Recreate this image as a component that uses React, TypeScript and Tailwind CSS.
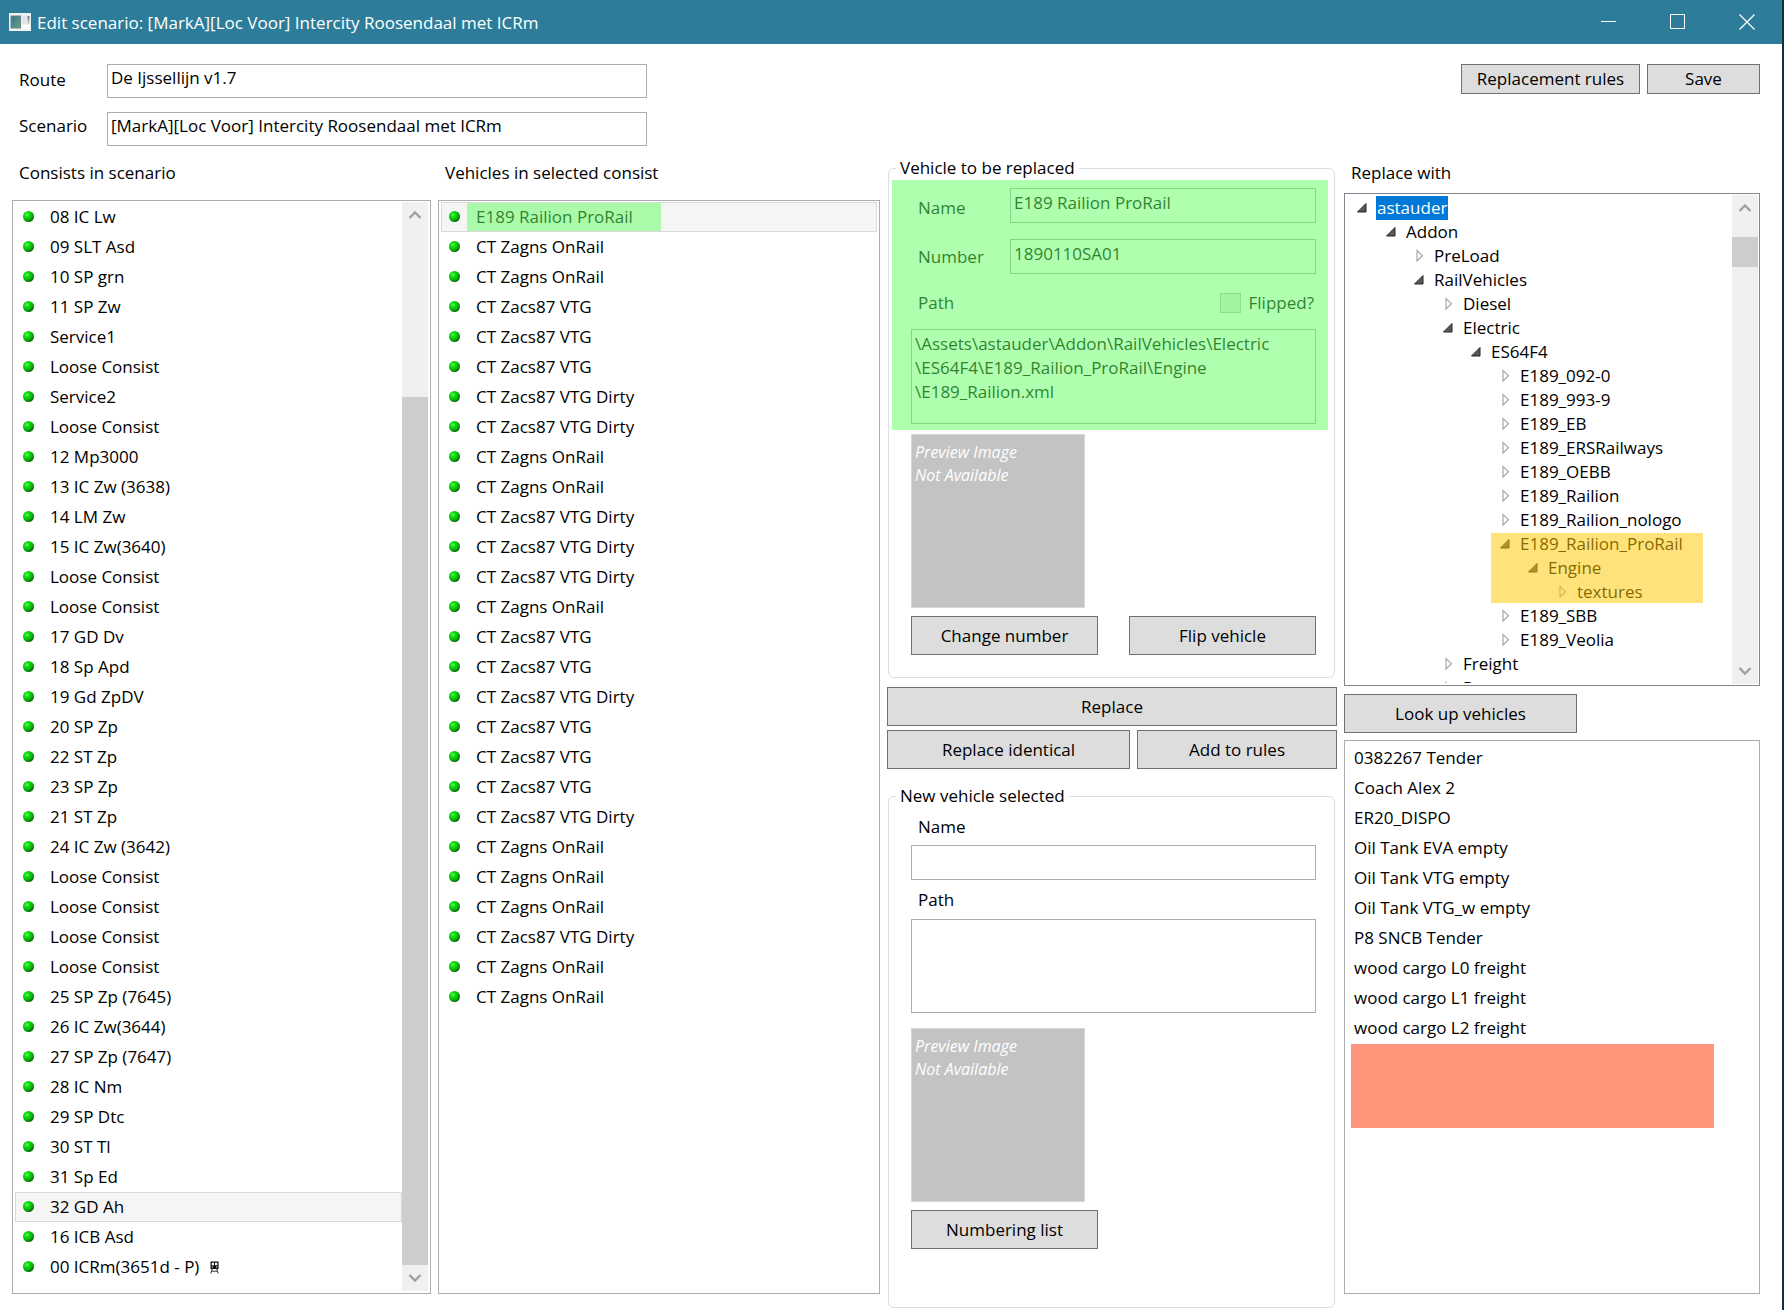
import React from "react";

type Option = { label: string; train?: boolean };

const consists: Option[] = [
  "08 IC Lw", "09 SLT Asd", "10 SP grn", "11 SP Zw", "Service1", "Loose Consist", "Service2", "Loose Consist",
  "12 Mp3000", "13 IC Zw (3638)", "14 LM Zw", "15 IC Zw(3640)", "Loose Consist", "Loose Consist", "17 GD Dv",
  "18 Sp Apd", "19 Gd ZpDV", "20 SP Zp", "22 ST Zp", "23 SP Zp", "21 ST Zp", "24 IC Zw (3642)", "Loose Consist",
  "Loose Consist", "Loose Consist", "Loose Consist", "25 SP Zp (7645)", "26 IC Zw(3644)", "27 SP Zp (7647)",
  "28 IC Nm", "29 SP Dtc", "30 ST Tl", "31 Sp Ed", "32 GD Ah", "16 ICB Asd",
].map((label) => ({ label }) as Option).concat([{ label: "00 ICRm(3651d - P)", train: true }]);

const Z = "CT Zagns OnRail";
const V = "CT Zacs87 VTG";
const D = "CT Zacs87 VTG Dirty";
const vehicles = ["E189 Railion ProRail", Z, Z, V, V, V, D, D, Z, Z, D, D, D, Z, V, V, D, V, V, V, D, Z, Z, Z, D, Z, Z];

const stock = [
  "0382267 Tender", "Coach Alex 2", "ER20_DISPO", "Oil Tank EVA empty", "Oil Tank VTG empty", "Oil Tank VTG_w empty",
  "P8 SNCB Tender", "wood cargo L0 freight", "wood cargo L1 freight", "wood cargo L2 freight",
];

type Node = { label: string; level: number; open?: boolean };
const treeTop: Node[] = [
  { label: "astauder", level: 0, open: true },
  { label: "Addon", level: 1, open: true },
  { label: "PreLoad", level: 2 },
  { label: "RailVehicles", level: 2, open: true },
  { label: "Diesel", level: 3 },
  { label: "Electric", level: 3, open: true },
  { label: "ES64F4", level: 4, open: true },
  { label: "E189_092-0", level: 5 },
  { label: "E189_993-9", level: 5 },
  { label: "E189_EB", level: 5 },
  { label: "E189_ERSRailways", level: 5 },
  { label: "E189_OEBB", level: 5 },
  { label: "E189_Railion", level: 5 },
  { label: "E189_Railion_nologo", level: 5 },
];
const treeMarked: Node[] = [
  { label: "E189_Railion_ProRail", level: 5, open: true },
  { label: "Engine", level: 6, open: true },
  { label: "textures", level: 7 },
];
const treeBottom: Node[] = [
  { label: "E189_SBB", level: 5 },
  { label: "E189_Veolia", level: 5 },
  { label: "Freight", level: 3 },
  { label: "Passenger", level: 3 },
];

const indent = ["pl-0", "pl-[29px]", "pl-[57px]", "pl-[86px]", "pl-[114px]", "pl-[143px]", "pl-[171px]", "pl-[200px]"];

const field = "border border-[#abadb3] bg-white px-[3px] outline-none";

function Button({ className = "", children }: { className?: string; children: React.ReactNode }) {
  return (
    <button type="button" className={`border border-[#707070] bg-[#dddddd] text-center ${className}`}>
      {children}
    </button>
  );
}

function Dot() {
  return (
    <svg width="12" height="12" viewBox="0 0 12 12" className="shrink-0" aria-hidden="true">
      <defs>
        <radialGradient id="led" cx="0.36" cy="0.34" r="0.68">
          <stop offset="0" stopColor="#5cff5c" />
          <stop offset="0.3" stopColor="#12e012" />
          <stop offset="0.7" stopColor="#0bb00b" />
          <stop offset="1" stopColor="#066006" />
        </radialGradient>
      </defs>
      <circle cx="5.5" cy="5.5" r="5.5" fill="url(#led)" />
    </svg>
  );
}

function Train() {
  return (
    <svg width="9" height="13" viewBox="0 0 9 13" className="ml-[11px]" aria-hidden="true">
      <path fillRule="evenodd" d="M0.5 0.5H8.5V8H0.5ZM1.7 1.7V4.2H4V1.7ZM5 1.7V4.2H7.3V1.7ZM1.8 5.6V6.6H3V5.6ZM6 5.6V6.6H7.2V5.6Z" fill="#111" />
      <path d="M2.2 8L0.8 12.5M6.8 8L8.2 12.5M1.6 10.2H7.4" fill="none" stroke="#333" />
    </svg>
  );
}

function Chevron({ up }: { up?: boolean }) {
  return (
    <svg width="14" height="10" viewBox="0 0 14 10" fill="none" stroke="#a0a0a0" strokeWidth="2.4" aria-hidden="true">
      <path d={up ? "M1.5 8L7 2.5L12.5 8" : "M1.5 2L7 7.5L12.5 2"} />
    </svg>
  );
}

function Scrollbar({ lead, thumb }: { lead: string; thumb: string }) {
  return (
    <div className="flex w-[26px] shrink-0 flex-col bg-[#f0f0f0]">
      <button type="button" aria-label="Scroll up" className="flex h-[25px] shrink-0 items-center justify-center">
        <Chevron up />
      </button>
      <div className="flex min-h-0 flex-1 flex-col">
        <div className={lead} />
        <div className={`bg-[#cdcdcd] ${thumb}`} />
      </div>
      <button type="button" aria-label="Scroll down" className="flex h-[26px] shrink-0 items-center justify-center">
        <Chevron />
      </button>
    </div>
  );
}

function Arrow({ open }: { open?: boolean }) {
  return (
    <svg width="12" height="14" viewBox="0 0 12 14" className="mr-2 shrink-0" aria-hidden="true">
      {open ? (
        <path d="M10 2.5V11H1.5Z" fill="#595959" stroke="#262626" />
      ) : (
        <path d="M4 1.5V12L9.5 6.7Z" fill="white" stroke="#a0a0a0" strokeWidth="1.1" />
      )}
    </svg>
  );
}

function TreeRow({ node }: { node: Node }) {
  return (
    <li role="treeitem" aria-expanded={!!node.open} className={`flex h-6 items-center ${indent[node.level]}`}>
      <Arrow open={node.open} />
      <span className={node.level === 0 ? "bg-[#0078d7] px-px text-white" : "px-px"}>{node.label}</span>
    </li>
  );
}

function Preview() {
  return (
    <div className="h-[174px] w-[174px] border border-[#d6d6d6] bg-[#c3c3c3] px-[3px] py-1.5 text-base leading-[23px] text-white italic">
      Preview Image
      <br />
      Not Available
    </div>
  );
}

export default function App() {
  return (
    <div className="flex min-h-screen flex-col border-r-2 border-[#12303f] bg-white font-['Open_Sans','Noto_Sans',sans-serif] text-[17px] leading-6 text-black">
      <header className="flex h-11 shrink-0 items-center bg-[#2d7d9a] text-white">
        <svg width="22" height="18" viewBox="0 0 22 18" className="ml-[9px] shrink-0" aria-hidden="true">
          <defs>
            <linearGradient id="pic" x1="0" y1="0" x2="1" y2="1">
              <stop offset="0" stopColor="#3f6f9c" />
              <stop offset="1" stopColor="#5fa873" />
            </linearGradient>
            <linearGradient id="bar" x1="0" y1="0" x2="0" y2="1">
              <stop offset="0" stopColor="#4f7f80" />
              <stop offset="1" stopColor="#cfe0d8" />
            </linearGradient>
          </defs>
          <rect width="22" height="18" fill="#eef0f2" />
          <rect x="2" y="3" width="9.5" height="12" fill="url(#pic)" stroke="#6d878e" />
          <rect x="13" y="3" width="4.5" height="8" fill="#e2e4e8" />
          <rect x="18.5" y="3" width="2" height="8" fill="url(#bar)" />
          <rect x="13" y="12" width="7.5" height="4" fill="#fff" />
        </svg>
        <h1 className="ml-1.5 flex-1 pt-px">Edit scenario: [MarkA][Loc Voor] Intercity Roosendaal met ICRm</h1>
        <div className="flex pr-px">
          <button type="button" aria-label="Minimize" className="flex h-11 w-[69px] items-center justify-center">
            <svg width="16" height="16" stroke="white" fill="none"><path d="M0 7.5h15" /></svg>
          </button>
          <button type="button" aria-label="Maximize" className="flex h-11 w-[69px] items-center justify-center">
            <svg width="16" height="16" stroke="white" fill="none"><path d="M0.5 0.5h14v14h-14z" /></svg>
          </button>
          <button type="button" aria-label="Close" className="flex h-11 w-[69px] items-center justify-center">
            <svg width="16" height="16" stroke="white" fill="none" strokeWidth="1.2"><path d="M0.5 0.5l15 15M15.5 0.5l-15 15" /></svg>
          </button>
        </div>
      </header>

      <div className="flex items-start justify-between pt-5 pr-[22px] pl-[19px]">
        <div className="grid grid-cols-[88px_540px] gap-y-[14px]">
          <label htmlFor="route" className="pt-1">Route</label>
          <input id="route" readOnly value="De Ijssellijn v1.7" className={`h-[34px] pb-2 ${field}`} />
          <label htmlFor="scenario" className="pt-0.5">Scenario</label>
          <input id="scenario" readOnly value="[MarkA][Loc Voor] Intercity Roosendaal met ICRm" className={`h-[34px] pb-2 ${field}`} />
        </div>
        <div className="flex gap-[7px]">
          <Button className="h-[30px] w-[179px]">Replacement rules</Button>
          <Button className="h-[30px] w-[113px]">Save</Button>
        </div>
      </div>

      <main className="mt-[10px] grid flex-1 grid-cols-[minmax(0,419fr)_minmax(0,442fr)_minmax(0,450fr)_minmax(0,416fr)] gap-x-[7px] pr-[22px] pl-3">
        <section className="flex flex-col pb-4">
          <h2 className="flex h-[34px] items-center pl-[7px]">Consists in scenario</h2>
          <div className="mt-[10px] flex flex-1 border border-[#abadb3] px-0.5 pt-px pb-0.5">
            <ul role="listbox" aria-label="Consists in scenario" className="min-w-0 flex-1">
              {consists.map((c, i) => (
                <li
                  key={i}
                  role="option"
                  aria-selected={i === 33}
                  className={`flex h-[30px] items-center border pl-[7px] ${i === 33 ? "border-[#dadada] bg-[#f5f5f5]" : "border-transparent"}`}
                >
                  <Dot />
                  <span className="ml-[15px]">{c.label}</span>
                  {c.train && <Train />}
                </li>
              ))}
            </ul>
            <Scrollbar lead="h-[170px]" thumb="flex-1" />
          </div>
        </section>

        <section className="flex flex-col pb-4">
          <h2 className="flex h-[34px] items-center pl-[7px]">Vehicles in selected consist</h2>
          <ul role="listbox" aria-label="Vehicles in selected consist" className="mt-[10px] flex-1 border border-[#abadb3] px-0.5 pt-px pb-0.5">
            {vehicles.map((v, i) => (
              <li
                key={i}
                role="option"
                aria-selected={i === 0}
                className={`flex h-[30px] items-center border pl-[7px] ${i === 0 ? "border-[#dadada] bg-[#f5f5f5]" : "border-transparent"}`}
              >
                <Dot />
                {i === 0 ? (
                  <span className="relative ml-1.5 flex h-7 w-[194px] items-center pl-[9px]">
                    {v}
                    <span className="absolute inset-0 bg-[#60ff60]/50" />
                  </span>
                ) : (
                  <span className="ml-[15px]">{v}</span>
                )}
              </li>
            ))}
          </ul>
        </section>

        <section className="flex flex-col pb-0.5">
          <fieldset className="mr-0.5 ml-px rounded-md border border-[#d5dfe5] pr-[6px] pb-[22px] pl-[3px]">
            <legend className="ml-1 px-1">Vehicle to be replaced</legend>
            <div className="relative pt-[8px] pr-3 pb-1.5 pl-[19px]">
              <div className="grid grid-cols-[92px_minmax(0,1fr)] gap-y-4 pl-[7px]">
                <label htmlFor="old-name" className="pt-2">Name</label>
                <input id="old-name" readOnly value="E189 Railion ProRail" className={`h-[35px] pb-1.5 ${field}`} />
                <label htmlFor="old-number" className="pt-1.5">Number</label>
                <input id="old-number" readOnly value="1890110SA01" className={`h-[35px] pb-1.5 ${field}`} />
              </div>
              <div className="mt-[17px] flex items-center justify-between pr-0.5 pl-[7px]">
                <label htmlFor="old-path">Path</label>
                <span className="flex items-center gap-2">
                  <input id="flipped" type="checkbox" disabled className="h-5 w-[21px] appearance-none border border-[#bcbcbc] bg-[#e6e6e6]" />
                  <label htmlFor="flipped">Flipped?</label>
                </span>
              </div>
              <textarea
                id="old-path"
                readOnly
                value={"\\Assets\\astauder\\Addon\\RailVehicles\\Electric\n\\ES64F4\\E189_Railion_ProRail\\Engine\n\\E189_Railion.xml"}
                className={`mt-[14px] block h-[95px] w-full resize-none overflow-hidden pt-0.5 whitespace-pre ${field}`}
              />
              <div className="pointer-events-none absolute inset-0 bg-[#60ff60]/50" />
            </div>
            <div className="mt-1 pr-3 pl-[19px]">
              <Preview />
              <div className="mt-2 grid grid-cols-2 gap-[31px]">
                <Button className="h-[39px]">Change number</Button>
                <Button className="h-[39px]">Flip vehicle</Button>
              </div>
            </div>
          </fieldset>

          <Button className="mt-[9px] h-[39px]">Replace</Button>
          <div className="mt-1 grid grid-cols-[243fr_200fr] gap-[7px]">
            <Button className="h-[39px]">Replace identical</Button>
            <Button className="h-[39px]">Add to rules</Button>
          </div>

          <fieldset className="mt-[15px] mr-0.5 ml-px flex-1 rounded-md border border-[#d5dfe5] pr-[18px] pl-[22px]">
            <legend className="-ml-[15px] px-1">New vehicle selected</legend>
            <label htmlFor="new-name" className="mt-[7px] block pl-[7px]">Name</label>
            <input id="new-name" className={`mt-1.5 block h-[35px] w-full ${field}`} />
            <label htmlFor="new-path" className="mt-2 block pl-[7px]">Path</label>
            <textarea id="new-path" className={`mt-[7px] mb-[15px] block h-[94px] w-full resize-none ${field}`} />
            <Preview />
            <Button className="mt-2 h-[39px] w-[187px]">Numbering list</Button>
          </fieldset>
        </section>

        <section className="flex flex-col pb-4">
          <h2 className="flex h-[34px] items-center pl-[7px]">Replace with</h2>
          <div className="mt-[3px] flex h-[493px] border border-[#828790] p-px">
            <ul role="tree" aria-label="Replace with" className="mt-px mb-px min-w-0 flex-1 overflow-hidden pl-[10px]">
              {treeTop.map((n) => <TreeRow key={n.label} node={n} />)}
              <li role="none" className="relative">
                <ul role="group">
                  {treeMarked.map((n) => <TreeRow key={n.label} node={n} />)}
                </ul>
                <div className="absolute inset-y-px left-[135px] w-[212px] bg-[#ffc700]/52" />
              </li>
              {treeBottom.map((n) => <TreeRow key={n.label} node={n} />)}
            </ul>
            <Scrollbar lead="h-[17px]" thumb="h-[30px]" />
          </div>
          <Button className="mt-2 h-[39px] w-[233px]">Look up vehicles</Button>
          <div className="mt-[7px] flex-1 border border-[#abadb3] p-0.5">
            <ul role="listbox" aria-label="Vehicles found">
              {stock.map((s) => (
                <li key={s} role="option" aria-selected={false} className="flex h-[30px] items-center pl-[7px]">{s}</li>
              ))}
            </ul>
            <div className="mt-px ml-1 h-[84px] w-[363px] bg-[#ff957b]" />
          </div>
        </section>
      </main>
    </div>
  );
}
